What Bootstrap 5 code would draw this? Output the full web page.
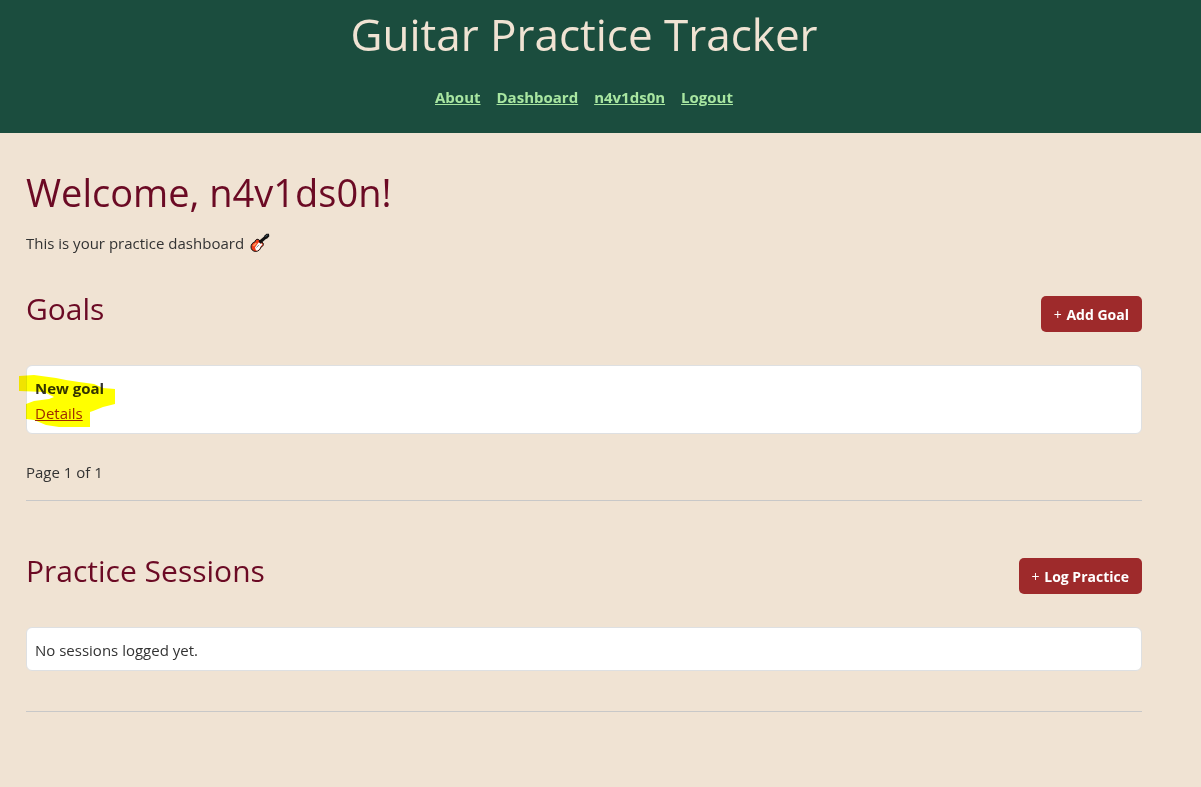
<!DOCTYPE html>
<html lang="en">
<head>
<meta charset="utf-8">
<meta name="viewport" content="width=device-width, initial-scale=1">
<title>Guitar Practice Tracker</title>
<link href="https://cdn.jsdelivr.net/npm/bootstrap@5.3.0/dist/css/bootstrap.min.css" rel="stylesheet">
<style>
  body { background: #f0e3d3; color: #333; font-family: "Open Sans", "Noto Sans", sans-serif; font-size: 15px; line-height: 24px; }
  .page-gutter { padding-left: 26px; padding-right: 59px; }
  .site-header { background: #1b4d3e; padding-top: 4px; padding-bottom: 24px; }
  .site-title { color: #f0e3d3; font-size: 44px; line-height: 60px; font-weight: 400; margin-bottom: 21px; }
  .site-nav a { color: #a8e6a1; font-weight: 700; }
  .dashboard { padding-top: 35px; }
  .welcome { color: #6b0a24; font-size: 38px; line-height: 48px; margin-bottom: 15px; }
  .intro { margin-bottom: 30px; }
  .section-title { color: #6b0a24; font-size: 30px; line-height: 40px; margin-bottom: 0; }
  .section-head { height: 47px; padding-top: 4px; margin-bottom: 33px; }
  .btn-wine, .btn-wine:hover { background: #9e2a2b; color: #fff; font-size: 14px; line-height: 20px; font-weight: 700; padding: 9px 13px 7px; border: 0; border-radius: 5px; }
  .btn-wine span { font-weight: 400; margin-right: 1px; }
  .entry { background: #fff; border: 1px solid #dee0e2; border-radius: 6px; padding: 10px 8px 7px; line-height: 25px; }
  .entry a { color: #9e2a2b; }
  .pager { margin: 26px 0 16px; }
  .rule { border-top: 1px solid #c8c8c8; opacity: 1; margin: 0 0 46px; }
  .entry + .rule { margin-top: 40px; }
  .marker { left: -8px; top: 9px; mix-blend-mode: multiply; pointer-events: none; }
</style>
</head>
<body>
<header class="site-header page-gutter text-center">
  <h1 class="site-title">Guitar Practice Tracker</h1>
  <nav class="site-nav d-flex justify-content-center gap-3">
    <a href="#">About</a>
    <a href="#">Dashboard</a>
    <a href="#">n4v1ds0n</a>
    <a href="#">Logout</a>
  </nav>
</header>
<main class="dashboard page-gutter">
  <h1 class="welcome">Welcome, n4v1ds0n!</h1>
  <p class="intro">This is your practice dashboard
    <svg class="align-text-bottom" width="22" height="20" viewBox="-2 0 22 20" fill="none" role="img" aria-label="guitar">
      <path d="M8 6.300C6.300 6 5.200 7.400 4.800 9 2.500 9.400 1 11.600 1 14c0 2.600 2 4.500 4.800 4.400C8.500 18.300 10.400 16.500 10.800 14.300 13 13.500 13.900 11.600 13 10Z" fill="#f03a17" stroke="#111"/>
      <path d="M5.500 9.800 2.500 12.500 4 13.500 7 10.500Z" fill="#ff9a60"/>
      <path d="M8.500 9.500 12.500 11C11.700 13.200 10 13.500 9.900 15 9 17 7.500 17.700 6 17.500L5 14.500Z" fill="#fff"/>
      <path d="M6.500 14.500 9 11.800" stroke="#888"/>
      <path d="M9.500 9.500 16 3.800" stroke="#111" stroke-width="3"/>
      <path d="M14 3 16.500.8 19 .8 19.300 3.200 16.800 6Z" fill="#111"/>
      <path d="M15.500 3.400 17.600 2" stroke="#546e7a"/>
    </svg>
  </p>
  <section>
    <div class="section-head d-flex justify-content-between align-items-end">
      <h2 class="section-title align-self-start">Goals</h2>
      <button type="button" class="btn btn-wine"><span>+</span> Add Goal</button>
    </div>
    <div class="entry position-relative">
      <strong class="d-block">New goal</strong>
      <a href="#">Details</a>
      <svg class="marker position-absolute" width="97" height="54" viewBox="0 0 97 54" aria-hidden="true">
        <path d="M0 1 15 0 37 3 47 5 60 7 75 9 84 13 96 14V29L84 32 74 36 71 37V52H40L27 50 15 45 7 44V29L15 26 30 24 35 22 25 17 0 16Z" fill="#ff0"/>
      </svg>
    </div>
    <p class="pager">Page 1 of 1</p>
    <hr class="rule">
  </section>
  <section>
    <div class="section-head d-flex justify-content-between align-items-end">
      <h2 class="section-title align-self-start">Practice Sessions</h2>
      <button type="button" class="btn btn-wine"><span>+</span> Log Practice</button>
    </div>
    <div class="entry">No sessions logged yet.</div>
    <hr class="rule">
  </section>
</main>
<script src="https://cdn.jsdelivr.net/npm/bootstrap@5.3.0/dist/js/bootstrap.bundle.min.js"></script>
</body>
</html>
